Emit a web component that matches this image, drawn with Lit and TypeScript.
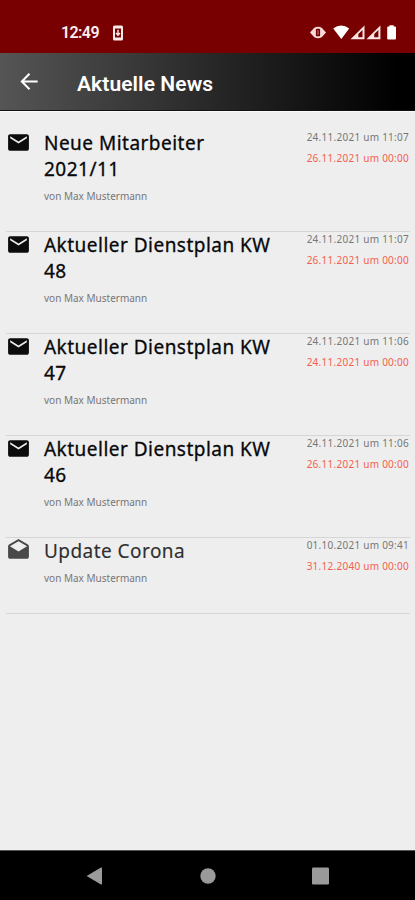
import { LitElement, html, css, svg } from "lit";
import { customElement, property } from "lit/decorators.js";

interface NewsItem {
  title: string;
  author: string;
  published: string;
  expires: string;
  read: boolean;
}

const AUTHOR = "von Max Mustermann";

const NEWS: NewsItem[] = [
  { title: "Neue Mitarbeiter 2021/11", author: AUTHOR, published: "24.11.2021 um 11:07", expires: "26.11.2021 um 00:00", read: false },
  { title: "Aktueller Dienstplan KW 48", author: AUTHOR, published: "24.11.2021 um 11:07", expires: "26.11.2021 um 00:00", read: false },
  { title: "Aktueller Dienstplan KW 47", author: AUTHOR, published: "24.11.2021 um 11:06", expires: "24.11.2021 um 00:00", read: false },
  { title: "Aktueller Dienstplan KW 46", author: AUTHOR, published: "24.11.2021 um 11:06", expires: "26.11.2021 um 00:00", read: false },
  { title: "Update Corona", author: AUTHOR, published: "01.10.2021 um 09:41", expires: "31.12.2040 um 00:00", read: true },
];

const mailClosed = svg`<path fill="#0c0c0c" d="M20 4H4c-1.1 0-1.99.9-1.99 2L2 18c0 1.1.9 2 2 2h16c1.1 0 2-.9 2-2V6c0-1.1-.9-2-2-2zm0 4l-8 5-8-5V6l8 5 8-5v2z"/>`;
const mailOpen = svg`<path fill="#484848" d="M21.99 8c0-.72-.37-1.35-.94-1.7L12 1 2.95 6.3C2.38 6.65 2 7.28 2 8v10c0 1.1.9 2 2 2h16c1.1 0 2-.9 2-2l-.01-10zM12 13L3.74 7.84 12 3l8.26 4.84L12 13z"/>`;

@customElement("status-bar")
export class StatusBar extends LitElement {
  static styles = css`
    :host {
      display: flex;
      justify-content: space-between;
      height: 53px;
      padding: 12px 17px 0 61px;
      box-sizing: border-box;
      background: #780000;
      color: #fbeeee;
      font: 500 16px/42px Roboto, sans-serif;
    }
    .left { display: flex; align-items: center; gap: 13px; }
    .time { width: 38px; white-space: nowrap; letter-spacing: -0.6px; font-weight: 600; }
    svg { display: block; }
  `;
  render() {
    return html`
      <div class="left">
        <span class="time">12:49</span>
        <svg width="12" height="16" viewBox="0 0 12 16">
          <rect x="1" y="0.5" width="10" height="15" rx="1.6" fill="#fbeaea" />
          <rect x="3" y="3.5" width="6" height="9" fill="#780000" />
          <path d="M6 4.8v5M4 8l2 2.3L8 8" fill="none" stroke="#fbeaea" stroke-width="1.4" />
        </svg>
      </div>
      <svg width="88" height="41" viewBox="310 12 88 41">
        <path fill="#f6d9d9" d="M310 32.5l4-4.4q4-2.6 8 0l4 4.400-4 4.400q-4 2.600-8 0z" />
        <rect x="315.900" y="28.800" width="4.200" height="7.400" rx="1" fill="#780000" />
        <path d="M318 30.200v4.600" stroke="#c98080" />
        <path fill="#fff" d="M333.200 28.400q8-6 16 0L341.300 39z" />
        <path fill="#fbe6e6" fill-rule="evenodd" d="M350.500 39.300L364.500 25.500v13.800zM358.300 37.300h4.200V30L358.300 34z" />
        <path fill="#fbe6e6" fill-rule="evenodd" d="M366.400 39.300L380.400 25.500v13.800zM374.200 37.300h4.200V30l-4.200 4z" />
        <path fill="#fff" d="M387.200 27.500q0-1 1-1h1.300v-1.300h4.200v1.300h1.300q1 0 1 1v11q0 1-1 1h-6.800q-1 0-1-1z" />
      </svg>
    `;
  }
}

@customElement("app-header")
export class AppHeader extends LitElement {
  static styles = css`
    :host {
      display: flex;
      align-items: center;
      gap: 36px;
      height: 58px;
      padding-left: 18px;
      box-sizing: border-box;
      background: linear-gradient(90deg, #555 0%, #000 96%);
      border-bottom: 1px solid #111;
      color: #fff;
    }
    svg { display: block; }
    .title {
      margin: 4px 0 0;
      font: 600 21px/28px Roboto, sans-serif;
      letter-spacing: 0.08px;
      white-space: nowrap;
    }
  `;
  render() {
    return html`
      <svg width="23" height="23" viewBox="0 0 24 24">
        <path d="M20.500 12H4.800M12 4L4 12l8 8" fill="none" stroke="#fff" stroke-width="2.1" />
      </svg>
      <h1 class="title">Aktuelle News</h1>
    `;
  }
}

@customElement("news-row")
export class NewsRow extends LitElement {
  @property({ attribute: false }) item!: NewsItem;

  static styles = css`
    :host {
      display: flex;
      align-items: flex-start;
      box-sizing: border-box;
      padding-bottom: 24px;
      border-bottom: 1px solid #d6d6d6;
      font-family: "Noto Sans", sans-serif;
    }
    svg { display: block; flex: none; }
    .text { width: 234px; margin-left: 13px; }
    .title {
      margin: 0;
      font-size: 19px;
      font-weight: 400;
      line-height: 26px;
      letter-spacing: 0.48px;
      color: #080808;
      -webkit-text-stroke: 0.3px #080808;
    }
    .read {
      color: #303030;
      letter-spacing: 0.45px;
      -webkit-text-stroke: 0.15px #303030;
    }
    .author { margin-top: 4px; font-size: 10px; line-height: 21px; color: #777; }
    .dates {
      margin: -3px 1px 0 auto;
      text-align: right;
      white-space: nowrap;
      font-size: 10px;
      line-height: 21px;
      letter-spacing: 0.26px;
      color: #777;
    }
    .expires { color: #f4604f; }
  `;
  render() {
    const n = this.item;
    return html`
      <svg width="25" height="25" viewBox="0 0 24 24">${n.read ? mailOpen : mailClosed}</svg>
      <div class="text">
        <h2 class="title ${n.read ? "read" : ""}">${n.title}</h2>
        <div class="author">${n.author}</div>
      </div>
      <div class="dates">
        <div>${n.published}</div>
        <div class="expires">${n.expires}</div>
      </div>
    `;
  }
}

@customElement("nav-bar")
export class NavBar extends LitElement {
  static styles = css`
    :host {
      display: flex;
      justify-content: space-between;
      align-items: center;
      height: 50px;
      padding: 0 86px;
      box-sizing: border-box;
      background: #000;
      border-top: 1px solid #555;
    }
    svg { display: block; }
  `;
  render() {
    return html`
      <svg width="17" height="18" viewBox="0 0 17 18"><path fill="#9a9a9a" d="M.6 9L15 .6q1-.4 1 .6v15.600q0 1-1 .6z" /></svg>
      <svg width="18" height="18" viewBox="0 0 18 18"><circle cx="9" cy="9" r="7.700" fill="#9a9a9a" /></svg>
      <svg width="17" height="18" viewBox="0 0 17 18"><rect y="0.500" width="17" height="17" rx="1.200" fill="#9a9a9a" /></svg>
    `;
  }
}

@customElement("app-root")
export class AppRoot extends LitElement {
  static styles = css`
    :host {
      display: flex;
      flex-direction: column;
      height: 900px;
      overflow: hidden;
      background: #eee;
    }
    .list { flex: 1; padding: 18px 5px 0 6px; border-top: 1px solid #fafafa; box-sizing: border-box; }
  `;
  render() {
    return html`
      <status-bar></status-bar>
      <app-header></app-header>
      <main class="list">${NEWS.map((n) => html`<news-row .item=${n}></news-row>`)}</main>
      <nav-bar></nav-bar>
    `;
  }
}
